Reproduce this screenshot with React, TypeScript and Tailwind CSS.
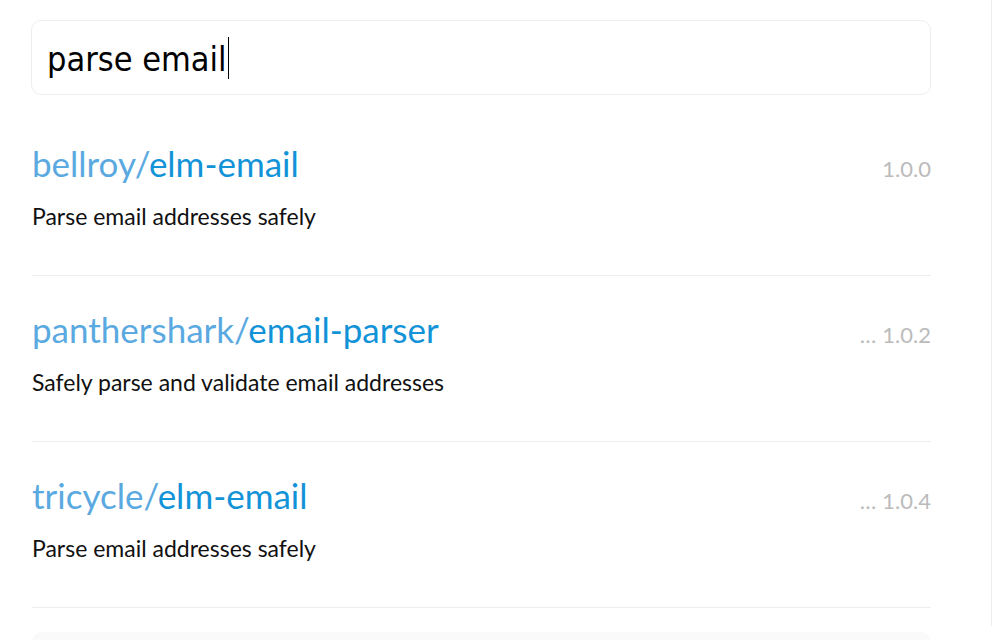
import React from 'react';

interface Pkg {
  owner: string;
  name: string;
  summary: string;
  version: string;
  more: boolean;
}

const PACKAGES: Pkg[] = [
  { owner: 'bellroy', name: 'elm-email', summary: 'Parse email addresses safely', version: '1.0.0', more: false },
  { owner: 'panthershark', name: 'email-parser', summary: 'Safely parse and validate email addresses', version: '1.0.2', more: true },
  { owner: 'tricycle', name: 'elm-email', summary: 'Parse email addresses safely', version: '1.0.4', more: true },
];

function PackageRow({ pkg }: { pkg: Pkg }) {
  return (
    <div className="pt-[33px] pb-[45px] border-b border-[#eeeeee]">
      <div className="flex items-baseline justify-between h-[40px]">
        <h1 className="text-[35px] leading-[40px] font-normal">
          <span className="text-[#5aa9e0]">{pkg.owner}/</span>
          <span className="text-[#1293d8]">{pkg.name}</span>
        </h1>
        <span className="text-[22px] text-[#bbbbbb]">
          {pkg.more && <span className="mr-[6px]">…</span>}
          {pkg.version}
        </span>
      </div>
      <p className="mt-[19px] text-[23px] leading-[28px] text-[#111111]">{pkg.summary}</p>
    </div>
  );
}

export default function App() {
  return (
    <div className="flex h-[640px] overflow-hidden bg-white" style={{ fontFamily: 'Lato, "Noto Sans", sans-serif' }}>
      <div className="w-[991px] shrink-0 pl-[31px] pt-[20px]">
        <div className="w-[900px]">
          <div className="h-[75px] rounded-[10px] border border-[#eeeeee] flex items-center px-[15px]">
            <span
              className="text-[34px] leading-[40px] text-black mt-[3px]"
              style={{ fontFamily: '"DejaVu Sans Condensed", "DejaVu Sans", sans-serif' }}
            >
              parse email
            </span>
            <span className="w-px h-[42px] bg-black ml-px" />
          </div>
          <div className="mt-[15px] ml-px w-[899px]">
            {PACKAGES.map((p) => (
              <PackageRow key={p.owner + p.name} pkg={p} />
            ))}
            <div className="mt-[24px] h-[40px] rounded-[10px] bg-[#fafafa]" />
          </div>
        </div>
      </div>
      <div className="flex-1 h-[626px] border-l border-[#eeeeee]" />
    </div>
  );
}
